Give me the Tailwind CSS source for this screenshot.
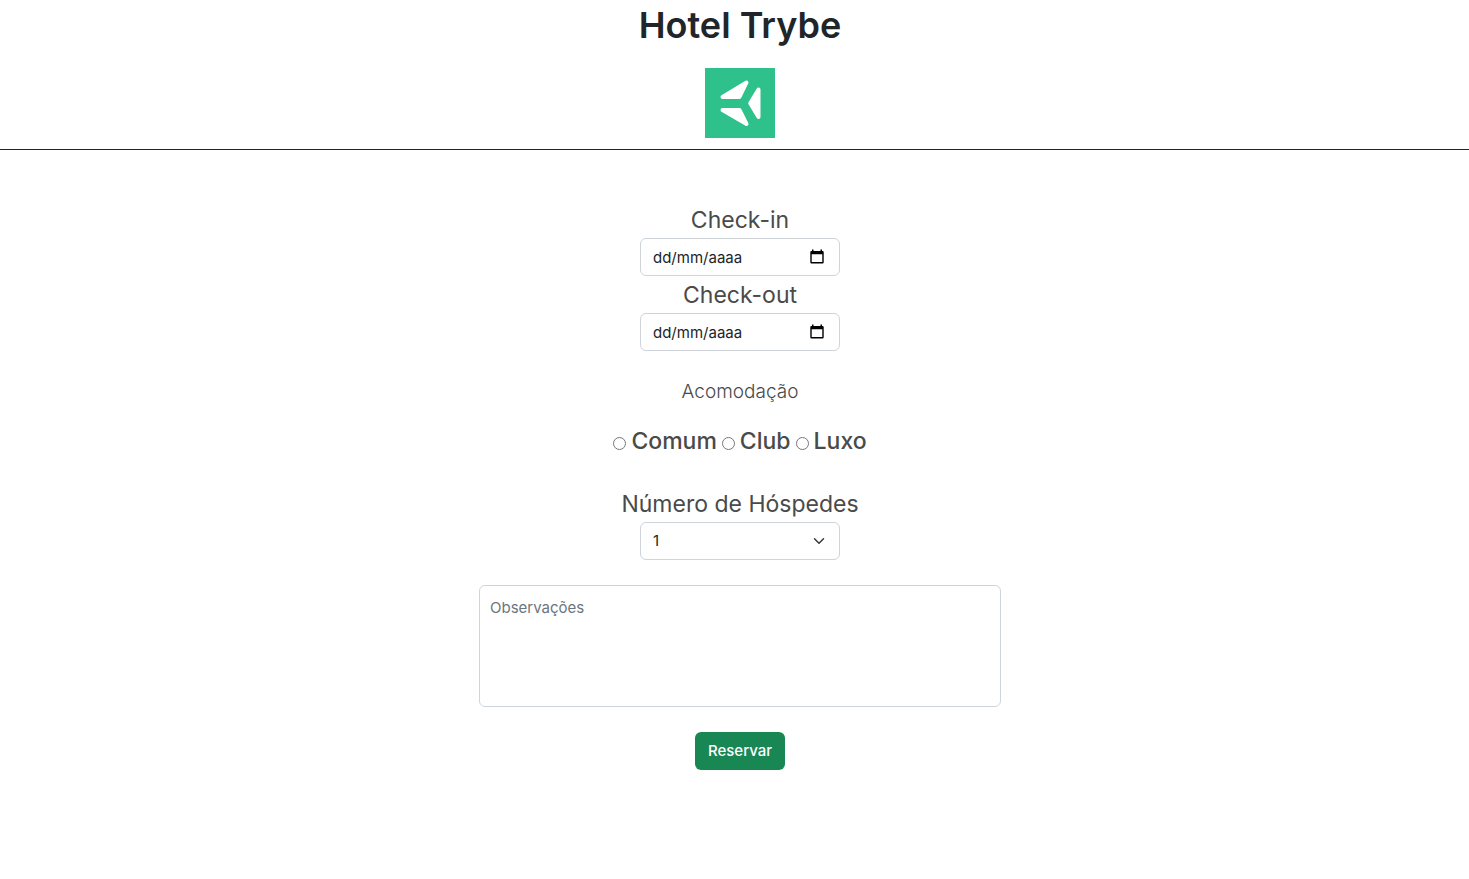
<!DOCTYPE html>
<html lang="pt-BR">
<head>
<meta charset="utf-8">
<meta name="viewport" content="width=device-width, initial-scale=1">
<title>Hotel Trybe</title>
<script src="https://cdn.jsdelivr.net/npm/@tailwindcss/browser@4"></script>
</head>
<body class="bg-white font-['Inter',sans-serif] text-[15px] text-[#212529]">
<header class="flex flex-col items-center border-b border-[#212529] pb-[11px] pl-[11px]">
  <h1 class="mb-[18px] text-4xl leading-[50px] font-semibold">Hotel Trybe</h1>
  <svg class="size-[70px]" viewBox="0 0 70 70" role="img" aria-label="Trybe">
    <rect width="70" height="70" fill="#2fc18c"/>
    <g fill="#fff" stroke="#fff" stroke-width="4" stroke-linejoin="round">
      <path d="M17.5 29 41.5 14.5 34.5 29Z"/>
      <path d="M17.5 42 41.5 56 34.5 42Z"/>
      <path d="M53.5 21.5V49L45.2 35.3Z"/>
    </g>
  </svg>
</header>
<main class="pt-[52px] pl-[11px]">
  <form class="flex flex-col items-center">
    <label for="checkin" class="text-[23px] leading-9 text-[#4a4a4a]">Check-in</label>
    <div class="relative w-[200px]">
      <input id="checkin" type="text" placeholder="dd/mm/aaaa" class="block h-[38px] w-full rounded-md border border-[#ced4da] px-3 placeholder:text-[#212529]">
      <button type="button" aria-label="Abrir calendário de check-in" class="absolute top-[11px] right-[15px]">
        <svg class="block size-4" viewBox="0 0 16 16"><path fill="#000" fill-rule="evenodd" d="M3 .5h1.500V2h7V.5H13V2h.500q1.200 0 1.200 1.200v10q0 1.200-1.200 1.200h-11q-1.200 0-1.200-1.200v-10Q1.300 2 2.500 2H3ZM2.700 5.200V13h10.600V5.200Z"/></svg>
      </button>
    </div>
    <label for="checkout" class="mt-px text-[23px] leading-9 text-[#4a4a4a]">Check-out</label>
    <div class="relative w-[200px]">
      <input id="checkout" type="text" placeholder="dd/mm/aaaa" class="block h-[38px] w-full rounded-md border border-[#ced4da] px-3 placeholder:text-[#212529]">
      <button type="button" aria-label="Abrir calendário de check-out" class="absolute top-[11px] right-[15px]">
        <svg class="block size-4" viewBox="0 0 16 16"><path fill="#000" fill-rule="evenodd" d="M3 .5h1.500V2h7V.5H13V2h.500q1.200 0 1.200 1.200v10q0 1.200-1.200 1.200h-11q-1.200 0-1.200-1.200v-10Q1.300 2 2.500 2H3ZM2.700 5.200V13h10.600V5.200Z"/></svg>
      </button>
    </div>
    <fieldset class="pt-[26px]">
      <legend class="contents"><span class="block text-center text-[19px] leading-[30px] font-light text-[#4a4a4a]">Acomodação</span></legend>
      <div class="mt-4 flex items-center justify-center gap-[5px] text-[23px] leading-9 font-medium text-[#4a4a4a]">
        <input id="comum" type="radio" name="quarto" class="mt-1 size-[13px]"><label for="comum">Comum</label>
        <input id="club" type="radio" name="quarto" class="mt-1 size-[13px]"><label for="club">Club</label>
        <input id="luxo" type="radio" name="quarto" class="mt-1 size-[13px]"><label for="luxo">Luxo</label>
      </div>
    </fieldset>
    <label for="hospedes" class="mt-[27px] text-[23px] leading-9 text-[#4a4a4a]">Número de Hóspedes</label>
    <div class="relative w-[200px]">
      <select id="hospedes" class="block h-[38px] w-full appearance-none rounded-md border border-[#ced4da] bg-white px-3">
        <option>1</option><option>2</option><option>3</option><option>4</option>
      </select>
      <svg class="pointer-events-none absolute top-[13px] right-[15px] h-3 w-3" viewBox="0 0 16 16" fill="none" stroke="#343a40" stroke-width="2" stroke-linecap="round" stroke-linejoin="round"><path d="m2 5 6 6 6-6"/></svg>
    </div>
    <textarea aria-label="Observações" placeholder="Observações" class="mt-[25px] block h-[122px] w-[522px] max-w-full resize-none rounded-md border border-[#ced4da] px-2.5 py-[11px] placeholder:text-[#6c757d]"></textarea>
    <button type="submit" class="mt-[25px] h-[38px] rounded-md bg-[#198754] px-[13px] font-medium text-white">Reservar</button>
  </form>
</main>
</body>
</html>
